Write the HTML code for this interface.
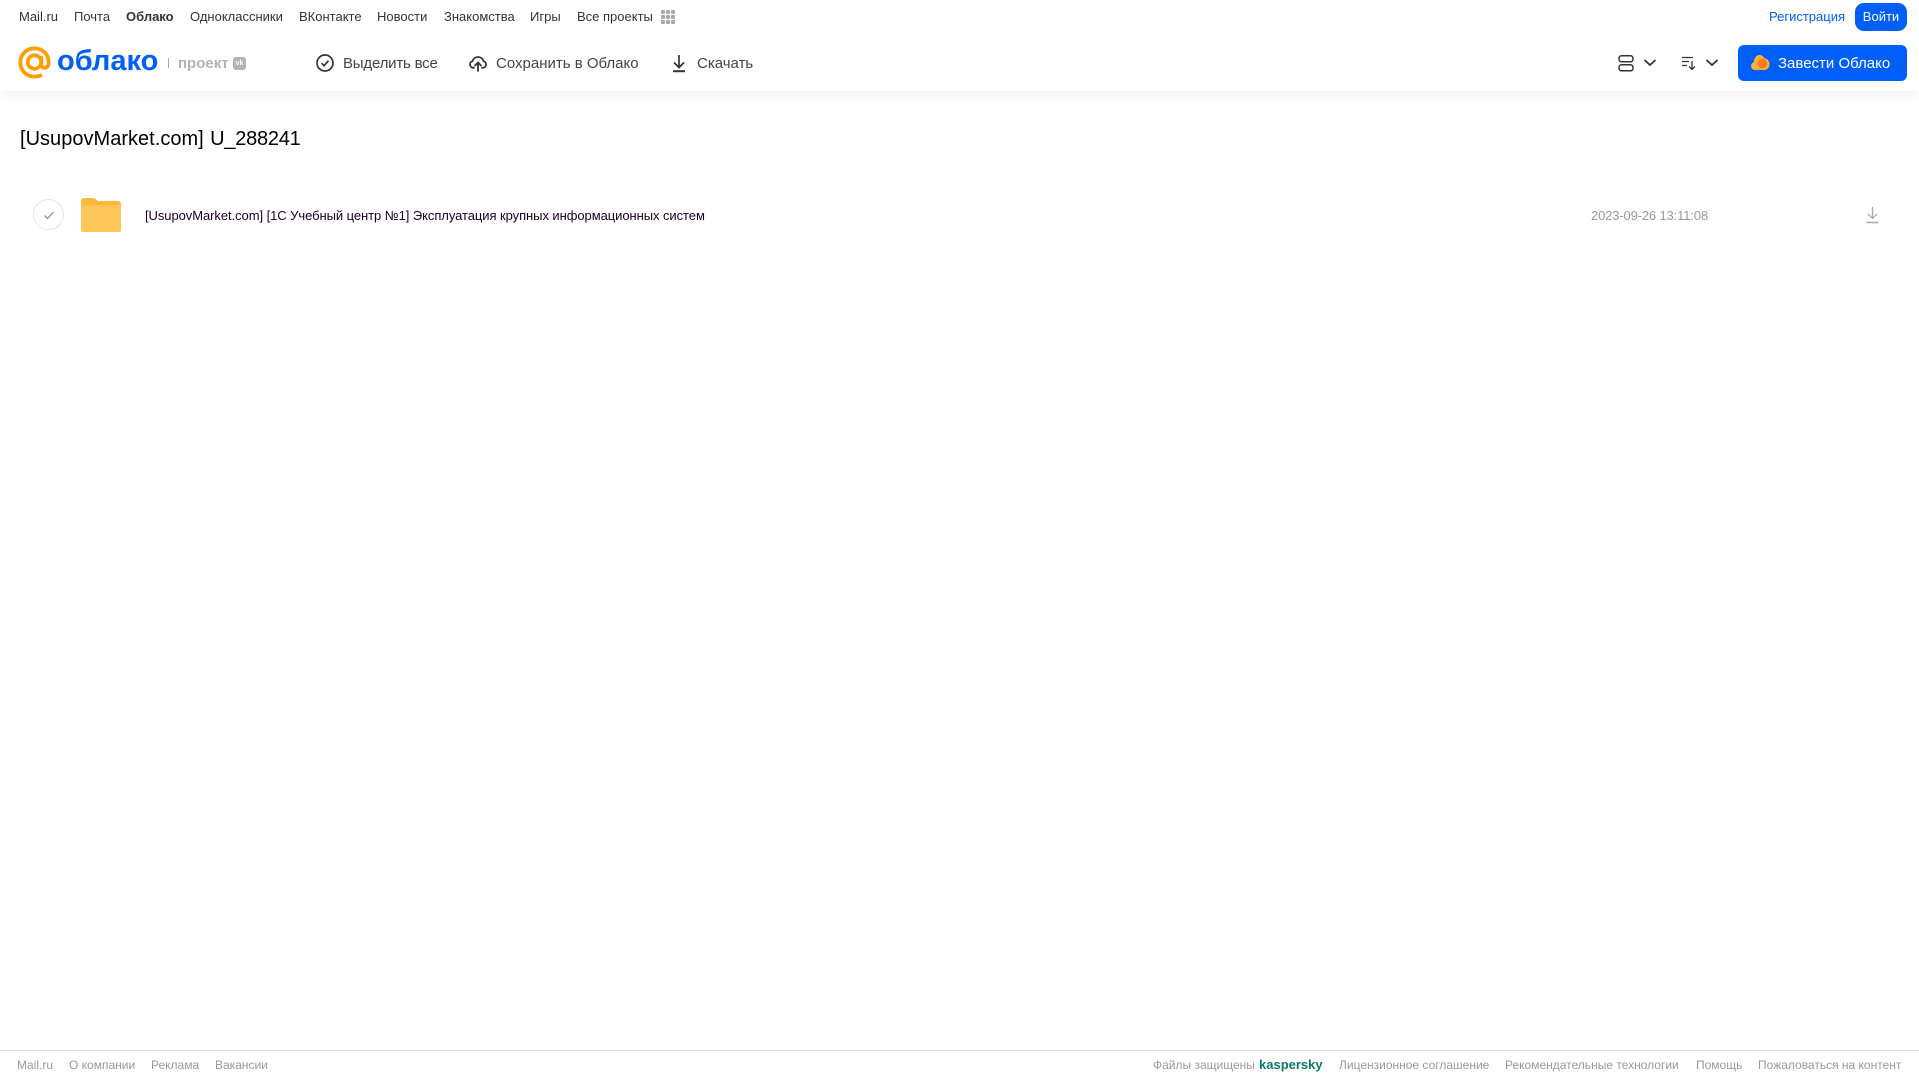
<!DOCTYPE html>
<html lang="ru"><head><meta charset="utf-8"><title>[UsupovMarket.com] U_288241</title>
<style>
html,body{margin:0;padding:0;background:#fff}
body{position:relative;width:1919px;height:1079px;overflow:hidden;font-family:"Liberation Sans",sans-serif}
a,.t{position:absolute;white-space:nowrap;text-decoration:none;display:block}
svg{position:absolute;display:block}
header{position:absolute;left:0;top:0;width:1919px;height:91px;background:#fff;box-shadow:0 2px 12px rgba(0,0,0,.07)}
.n{top:9px;font-size:13px;line-height:16px;color:#333}
.b{top:54px;font-size:15px;line-height:20px;color:#444}
.f{top:1058px;font-size:12px;line-height:14px;color:#999}
footer{position:absolute;left:0;top:1050px;width:1919px;height:29px;border-top:1px solid #d9d9d9;box-sizing:border-box}
</style></head><body>
<header>
<a class="n" style="left:19px">Mail.ru</a>
<a class="n" style="left:74px">Почта</a>
<a class="n" style="left:126px;font-weight:bold">Облако</a>
<a class="n" style="left:190px">Одноклассники</a>
<a class="n" style="left:299px">ВКонтакте</a>
<a class="n" style="left:377px">Новости</a>
<a class="n" style="left:444px">Знакомства</a>
<a class="n" style="left:530px">Игры</a>
<a class="n" style="left:577px">Все проекты</a>
<svg style="left:660px;top:9px" width="16" height="16" fill="#a8a8a8"><rect x="1" y="1" width="4" height="4" rx="1"/><rect x="6" y="1" width="4" height="4" rx="1"/><rect x="11" y="1" width="4" height="4" rx="1"/><rect x="1" y="6" width="4" height="4" rx="1"/><rect x="6" y="6" width="4" height="4" rx="1"/><rect x="11" y="6" width="4" height="4" rx="1"/><rect x="1" y="11" width="4" height="4" rx="1"/><rect x="6" y="11" width="4" height="4" rx="1"/><rect x="11" y="11" width="4" height="4" rx="1"/></svg>
<a class="n" style="left:1769px;color:#005ff9">Регистрация</a>
<a style="left:1855px;top:3px;width:52px;height:28px;border-radius:9px;background:#005ff9;color:#fff;font-size:13px;line-height:28px;text-align:center">Войти</a>

<svg style="left:18px;top:46px" width="33" height="33" viewBox="0 0 35 35" fill="none" stroke="#ff9e00" stroke-width="4"><circle cx="17.5" cy="17" r="7.2"/><path d="M24.7 10.5v8.7c0 5.6 7.8 5.6 7.8-1.7C32.500 8.500 26 2.500 17.500 2.500A14.700 14.700 0 0 0 2.500 17.500C2.500 26 9 32.500 17.500 32.500c3 0 5.500-.7 7.700-2"/></svg>
<span class="t" style="left:57px;top:41px;font-size:29px;line-height:40px;color:#005ff9;font-weight:bold">облако</span>
<div style="position:absolute;left:168px;top:58px;width:1px;height:10px;background:#aaa"></div>
<span class="t" style="left:178px;top:54px;font-size:15px;line-height:20px;font-weight:bold;color:#b3b3b3">проект</span>
<div class="t" style="left:233px;top:57px;width:13px;height:13px;border-radius:3px;background:#b3b3b3;color:#fff;font-size:7px;line-height:13px;text-align:center;font-weight:bold">vk</div>

<svg style="left:315px;top:53px" width="20" height="20" viewBox="0 0 20 20" fill="none" stroke="#333" stroke-width="1.700"><circle cx="10" cy="10" r="8"/><path d="M6.500 10.200l2.500 2.500 4.500-5"/></svg>
<a class="b" style="left:343px;letter-spacing:-.2px">Выделить все</a>
<svg style="left:468px;top:53px" width="20" height="20" viewBox="0 0 20 20" fill="none" stroke="#333" stroke-width="1.800" stroke-linecap="round" stroke-linejoin="round"><path d="M6 14.800H5.200a3.400 3.400 0 0 1-.6-6.700 5.600 5.600 0 0 1 10.800 0 3.400 3.400 0 0 1-.6 6.700H14"/><path d="M10 18V10M7 12.500l3-3 3 3"/></svg>
<a class="b" style="left:496px">Сохранить в Облако</a>
<svg style="left:669px;top:53px" width="20" height="20" viewBox="0 0 20 20" fill="none" stroke="#333" stroke-width="1.700"><path d="M10 2v12M5 9.500l5 5 5-5"/><path d="M4 18.200h12" stroke-width="2"/></svg>
<a class="b" style="left:697px">Скачать</a>

<svg style="left:1616px;top:54px" width="20" height="19" viewBox="0 0 20 19" fill="none" stroke="#333" stroke-width="1.500"><rect x="3" y="1.800" width="14" height="6" rx="2.500"/><rect x="3" y="10.800" width="14" height="6" rx="2.500"/></svg>
<svg style="left:1643px;top:58px" width="14" height="10" viewBox="0 0 14 10" fill="none" stroke="#333" stroke-width="1.800"><path d="M1.500 2l5.500 5 5.500-5"/></svg>
<svg style="left:1680px;top:54px" width="18" height="18" viewBox="0 0 18 18" fill="none" stroke="#333" stroke-width="1.300"><path d="M2 3.500h11M2 7.500h7M2 11.500h5M12 7v8.500M9 12.500l3 3 3-3"/></svg>
<svg style="left:1705px;top:58px" width="14" height="10" viewBox="0 0 14 10" fill="none" stroke="#333" stroke-width="1.800"><path d="M1.500 2l5.500 5 5.500-5"/></svg>
<a style="left:1738px;top:45px;width:169px;height:36px;border-radius:6px;background:#005ff9"></a>
<svg style="left:1750px;top:53px" width="20" height="18" viewBox="0 0 20 18"><path d="M5 17a4 4 0 0 1-1.200-7.800C4 5 6.500 2 9.500 2c2.200 0 3.800 1.200 4.700 3.200A6 6 0 0 1 15 17z" fill="#ffb03a"/><circle cx="12.500" cy="10.500" r="4.800" fill="#ff7a1f"/></svg>
<span class="t" style="left:1778px;top:54px;font-size:15px;line-height:20px;color:#fff">Завести Облако</span>
</header>

<h1 class="t" style="margin:0;left:20px;top:126px;font-size:20px;line-height:26px;font-weight:normal;color:#000;letter-spacing:.02px;word-spacing:.8px">[UsupovMarket.com] <span style="letter-spacing:-.25px">U_288241</span></h1>

<div style="position:absolute;left:33px;top:199px;width:31px;height:31px;box-sizing:border-box;border:1px solid #e5e5e5;border-radius:50%"></div>
<svg style="left:42px;top:208px" width="14" height="14" viewBox="0 0 14 14" fill="none" stroke="#999" stroke-width="1.300"><path d="M2.500 7.500l3 3 6-6.500"/></svg>
<svg style="left:81px;top:198px" width="40" height="35" viewBox="0 0 40 35"><path d="M3 0h8c3 0 4 1 5.500 3H37a3 3 0 0 1 3 3v5H0V3a3 3 0 0 1 3-3z" fill="#ffb938"/><path d="M0 7.500h40V32a2 2 0 0 1-2 2H2a2 2 0 0 1-2-2z" fill="#ffc65a"/></svg>
<a style="left:145px;top:208px;font-size:13px;line-height:15px;letter-spacing:-.065px;color:#1a001a">[UsupovMarket.com] [1С Учебный центр №1] Эксплуатация крупных информационных систем</a>
<span class="t" style="left:1591px;top:208px;font-size:13px;line-height:15px;letter-spacing:-.15px;color:#999">2023-09-26 13:11:08</span>
<svg style="left:1864px;top:206px" width="17" height="18" viewBox="0 0 17 18" fill="none" stroke="#aaa" stroke-width="1.300"><path d="M8.500 1v11M4 8l4.500 4.500L13 8"/><path d="M2.500 16.500h12" stroke-width="1.600"/></svg>

<footer></footer>
<a class="f" style="left:17px">Mail.ru</a>
<a class="f" style="left:69px">О компании</a>
<a class="f" style="left:151px">Реклама</a>
<a class="f" style="left:215px">Вакансии</a>
<span class="t f" style="left:1153px">Файлы защищены</span>
<span class="t" style="left:1259px;top:1057px;font-size:13px;line-height:16px;font-weight:bold;color:#0a7b66">kaspersky</span>
<a class="f" style="left:1339px">Лицензионное соглашение</a>
<a class="f" style="left:1505px">Рекомендательные технологии</a>
<a class="f" style="left:1696px">Помощь</a>
<a class="f" style="left:1758px">Пожаловаться на контент</a>
</body></html>
